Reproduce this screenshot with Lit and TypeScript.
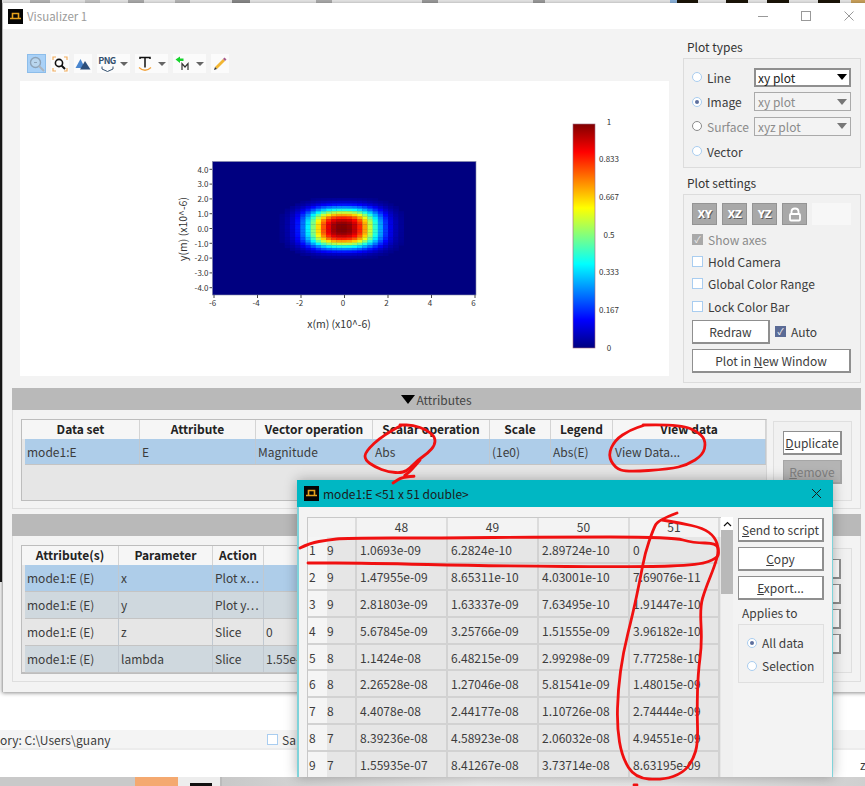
import { LitElement, html, css, svg } from "lit";
import { customElement } from "lit/decorators.js";

const FONT = css`"Noto Sans CJK SC", "Noto Sans", sans-serif`;

const jet = (v: number) => {
  const c = (x: number) => Math.round(255 * Math.max(0, Math.min(1, 1.5 - Math.abs(x))));
  return `rgb(${c(4 * v - 3)},${c(4 * v - 2)},${c(4 * v - 1)})`;
};

// mode profile, fitted by eye to the contours of the plot
const field = (x: number, y: number) =>
  Math.exp(-Math.pow(Math.abs(x + 0.07) / 1.6, 2.5) - Math.pow(Math.abs(y) / 1.3, 3));

const smooth = (pts: number[][]) => {
  let d = `M${pts[0][0]} ${pts[0][1]}`;
  for (let i = 1; i < pts.length - 1; i++) {
    const mx = (pts[i][0] + pts[i + 1][0]) / 2;
    const my = (pts[i][1] + pts[i + 1][1]) / 2;
    d += ` Q${pts[i][0]} ${pts[i][1]} ${mx} ${my}`;
  }
  const last = pts[pts.length - 1];
  return d + ` L${last[0]} ${last[1]}`;
};

const INK = [
  [[402, 425], [383, 435], [365, 452], [365, 460], [375, 467], [388, 472], [403, 473], [410, 468], [418, 460], [428, 453], [435, 445], [435, 437], [427, 430], [413, 425], [400, 425]],
  [[420, 460], [410, 472], [402, 477], [418, 476], [402, 477], [393, 483]],
  [[643, 425], [680, 424], [700, 433], [706, 442], [703, 455], [687, 465], [670, 469], [627, 472], [615, 468], [608, 455], [615, 440], [630, 430], [645, 425]],
  [[300, 548], [310, 543], [328, 540], [345, 538], [440, 538], [547, 537], [673, 537], [693, 543], [717, 543], [719, 553], [717, 558], [700, 565], [640, 567], [492, 566], [363, 563], [308, 563]],
  [[677, 513], [658, 520], [653, 530], [645, 553], [640, 580], [633, 613], [623, 653], [618, 690], [617, 727], [622, 757], [635, 778], [663, 780], [683, 773], [693, 760], [698, 743], [697, 710], [698, 673], [702, 643], [700, 607], [705, 590], [715, 565], [719, 550], [715, 537], [703, 528], [680, 523], [662, 520]],
  [[634, 785], [637, 785]],
];

const STRIP = [
  [30, 20, "#b5b5b5"], [85, 15, "#c4c4c4"], [128, 16, "#aaa"], [175, 15, "#b5b5b5"], [232, 18, "#888"],
  [316, 16, "#aaa"], [422, 16, "#999"], [533, 12, "#999"], [670, 12, "#8ab0d8"], [768, 14, "#e2a25c"],
  [851, 16, "#c9a05a"], [677, 21, "#1b1508"], [726, 22, "#1b1508"], [767, 22, "#1b1508"], [818, 22, "#1b1508"],
];

const DATA = [
  ["1", "9", "1.0693e-09", "6.2824e-10", "2.89724e-10", "0"],
  ["2", "9", "1.47955e-09", "8.65311e-10", "4.03001e-10", "7.69076e-11"],
  ["3", "9", "2.81803e-09", "1.63337e-09", "7.63495e-10", "1.91447e-10"],
  ["4", "9", "5.67845e-09", "3.25766e-09", "1.51555e-09", "3.96182e-10"],
  ["5", "8", "1.1424e-08", "6.48215e-09", "2.99298e-09", "7.77258e-10"],
  ["6", "8", "2.26528e-08", "1.27046e-08", "5.81541e-09", "1.48015e-09"],
  ["7", "8", "4.4078e-08", "2.44177e-08", "1.10726e-08", "2.74444e-09"],
  ["8", "7", "8.39236e-08", "4.58923e-08", "2.06032e-08", "4.94551e-09"],
  ["9", "7", "1.55935e-07", "8.41267e-08", "3.73714e-08", "8.63195e-09"],
];

const PARAMS = [
  ["mode1:E (E)", "x", "Plot x…", "", "sel"],
  ["mode1:E (E)", "y", "Plot y…", "", "alt"],
  ["mode1:E (E)", "z", "Slice", "0", "plain"],
  ["mode1:E (E)", "lambda", "Slice", "1.55e-6", "alt"],
];

const logo = html`<svg class="logo" viewBox="0 0 15 15">
  <rect width="15" height="15" fill="#050505" />
  <path d="M4.5 9.5V4.5H10.5V9.5M2 9.5H13" fill="none" stroke="#e5a21c" stroke-width="1.6" />
</svg>`;

const caret = html`<span class="caret"></span>`;

@customElement("app-root")
export class AppRoot extends LitElement {
  static styles = css`
    :host {
      display: block;
      position: relative;
      width: 865px;
      height: 786px;
      overflow: hidden;
      background: #fff;
      font-family: ${FONT};
      font-size: 12px;
      color: #3c3c3c;
    }
    * { box-sizing: border-box; }

    /* desktop behind the windows */
    .backdrop { display: flex; flex-direction: column; height: 786px; }
    .strip { position: relative; height: 3px; background: #e4e4e4; flex: none; }
    .strip i { position: absolute; top: 0; height: 3px; }
    .edge { position: absolute; left: 0; top: 0; width: 2px; height: 582px; background: #1a1a1a; }
    .spacer { flex: 1; }
    .status {
      flex: none;
      height: 20px;
      padding-top: 1px;
      background: #f4f4f4;
      border-bottom: 2px solid #ececec;
      display: flex;
      align-items: center;
      white-space: nowrap;
      line-height: 18px;
    }
    .status .path { width: 267px; }
    .status .box { margin-right: 4px; }
    .below { flex: none; height: 27px; display: flex; justify-content: flex-end; align-items: center; }
    .below span { width: 5px; overflow: hidden; padding-top: 2px; }
    .taskbar { flex: none; height: 9px; display: flex; background: #c9c9c9; }
    .taskbar .left { width: 135px; }
    .taskbar .orange { width: 43px; background: #f4a970; }
    .taskbar .tab { width: 44px; background: #ededed; border-right: 2px solid #bbb; padding: 6px 0 0 12px; }
    .taskbar .tab i { display: block; width: 22px; height: 3px; background: #111; }
    .taskbar .rest { flex: 1; background: linear-gradient(90deg, #c8c8c8, #ececec 40%, #e6e6e6 70%, #cfcfcf); }

    /* main window */
    .window {
      position: absolute;
      left: 2px;
      top: 3px;
      width: 870px;
      height: 689px;
      display: flex;
      flex-direction: column;
      background: #f3f3f3;
      border-left: 1px solid #b5b5b5;
      box-shadow: 0 1px 4px rgba(0, 0, 0, 0.45);
    }
    .titlebar {
      flex: none;
      height: 26px;
      background: #fff;
      display: flex;
      align-items: center;
      padding-left: 5px;
      color: #9b9b9b;
    }
    .titlebar .name { font-size: 11.5px; }
    .logo { width: 15px; height: 15px; flex: none; margin-right: 4px; }
    .controls { margin-left: auto; margin-right: 13px; display: flex; gap: 23px; }
    .controls svg { width: 20px; height: 12px; }
    .top { flex: none; height: 354px; display: flex; }
    .left { width: 680px; padding: 25px 0 0 17px; }
    .toolbar { display: flex; height: 19px; gap: 5px; padding-left: 7px; margin-bottom: 8px; }
    .tool {
      width: 18px;
      height: 19px;
      background: #fbfbfb;
      display: flex;
      align-items: center;
      justify-content: center;
    }
    .tool svg { width: 16px; height: 16px; flex: none; }
    .tool.on { width: 19px; background: #a9d1f7; border: 1px solid #8cbdea; }
    .tool.drop { width: 33px; justify-content: flex-start; padding-left: 2px; }
    .caret {
      margin-left: auto;
      margin-right: 2px;
      border: 4px solid transparent;
      border-top: 4px solid #666;
      border-bottom: 0;
    }
    .png { display: flex; flex-direction: column; align-items: center; width: 16px; }
    .pngt { font-size: 9px; line-height: 10px; font-weight: 600; color: #33506e; letter-spacing: -0.6px; }
    .png svg { width: 13px; height: 6px; }
    .plot { width: 649px; height: 295px; background: #fff; display: block; }
    .plot text { font-family: ${FONT}; fill: #333; }

    .side { width: 178px; }
    .side h4 { margin: 0; font-weight: 400; font-size: 12px; line-height: 18px; padding-left: 4px; color: #333; }
    .types { margin-top: 9px; }
    .group { border: 1px solid #dcdcdc; background: #f1f1f1; }
    .types .group { height: 110px; margin-top: 2px; padding: 6px 9px 0 8px; }
    .trow { display: flex; align-items: center; height: 24.6px; }
    .trow label { width: 50px; display: flex; align-items: center; gap: 5px; }
    .radio {
      width: 10px;
      height: 10px;
      flex: none;
      border-radius: 50%;
      border: 1px solid #a9cdf0;
      background: #fff;
      display: flex;
      align-items: center;
      justify-content: center;
    }
    .radio.on::after { content: ""; width: 4px; height: 4px; border-radius: 50%; background: #5d6f9e; }
    .radio.off { border-color: #8a8a8a; }
    .dim { color: #8b8b8b; }
    .select {
      width: 97px;
      height: 19px;
      margin-left: 12px;
      padding: 0 3px;
      display: flex;
      align-items: center;
      border: 1px solid #aaa;
      color: #8b8b8b;
      background: #f3f3f3;
    }
    .select.live { border: 2px solid #8f8f8f; background: #fff; color: #222; padding: 0 2px; }
    .select::after {
      content: "";
      margin-left: auto;
      border: 5px solid transparent;
      border-top: 6px solid #777;
      border-bottom: 0;
    }
    .select.live::after { border-top-color: #000; }
    .settings { margin-top: 6px; }
    .settings .group { height: 189px; margin-top: 2px; padding: 8px 9px 0 8px; }
    .views { display: flex; gap: 5px; height: 22px; margin-bottom: 3px; }
    .view {
      width: 25px;
      height: 22px;
      background: #a8a8a8;
      border: 1px solid #949494;
      color: #fff;
      font-family: "DejaVu Sans", sans-serif;
      font-weight: 700;
      font-size: 10px;
      letter-spacing: -0.5px;
      display: flex;
      align-items: center;
      justify-content: center;
      text-shadow: 1px 1px 0 #5c5c5c;
    }
    .view svg { width: 14px; height: 15px; }
    .blank { width: 39px; background: #f7f7f7; }
    .check { display: flex; align-items: center; gap: 5px; height: 22.4px; }
    .box { width: 11px; height: 11px; flex: none; background: #fff; border: 1px solid #a9cdf0; display: block; }
    .box.ticked {
      background: #5b6b96;
      border-color: #5b6b96;
      color: #fff;
      font-size: 9px;
      line-height: 9px;
      text-align: center;
    }
    .box.grey { background: #a9a9a9; border-color: #a9a9a9; color: #eee; font-size: 9px; line-height: 9px; text-align: center; }
    .redraw { display: flex; align-items: center; gap: 5px; margin-top: 2px; height: 24px; }
    .btn {
      background: #fff;
      border: 1px solid #8f8f8f;
      border-bottom-width: 2px;
      border-right-width: 2px;
      display: flex;
      align-items: center;
      justify-content: center;
      white-space: nowrap;
    }
    .btn u { text-underline-offset: 1px; }
    .redraw .btn { width: 78px; height: 24px; }
    .btn.wide { width: 159px; height: 24px; margin-top: 5px; }

    /* collapsible sections */
    .section { margin: 5px 0 0 9px; width: 849px; }
    .bar {
      height: 22px;
      background: #b9b9b9;
      display: flex;
      align-items: center;
      justify-content: center;
      gap: 1px;
      color: #444;
    }
    .bar i { border: 7px solid transparent; border-top: 9px solid #000; border-bottom: 0; margin-top: 1px; }
    .panel { display: flex; border: 1px solid #dedede; border-top: 0; padding: 9px 8px 0 8px; gap: 6px; }
    .attrs .panel { height: 99px; }
    .params { margin-top: 5px; }
    .params .panel { height: 146px; }
    .table { width: 746px; border: 1px solid #bdbdbd; border-right-color: #d8d8d8; background: #e6e6e6; height: 82px; display: flex; flex-direction: column; }
    .params .table { height: 129px; border-bottom-width: 2px; }
    .row { display: grid; flex: none; }
    .attrs .row { grid-template-columns: 118px 116px 117px 117px 61px 62px 153px; }
    .params .row { grid-template-columns: 97px 94px 51px 503px; }
    .head { height: 19px; background: #f6f6f6; font-weight: 700; color: #222; line-height: 18px; text-align: center; }
    .head span { border-right: 1px solid #d4d4d4; white-space: nowrap; overflow: hidden; }
    .cells { margin-left: 3px; height: 27px; line-height: 25px; border-bottom: 1px solid #c4c4c4; }
    .attrs .cells { height: 26px; background: #aecde9; grid-template-columns: 115px 116px 117px 117px 61px 62px 153px; }
    .params .cells { grid-template-columns: 94px 94px 51px 503px; }
    .cells span { padding-left: 2px; border-right: 1px solid #c0c8d0; white-space: nowrap; overflow: hidden; }
    .cells.sel { background: #aecde9; }
    .cells.alt { background: #cfd8de; }
    .cells.plain { background: #e6e6e6; }
    .actions { width: 79px; height: 80px; margin-top: 2px; border: 1px solid #dfdfdf; padding: 9px 9px 0; background: #f1f1f1; }
    .actions .btn { width: 59px; height: 24px; margin-bottom: 5px; }
    .actions .btn.off { background: #b4b4b4; border-color: #a6a6a6; color: #808080; }
    .params .actions { height: 125px; margin-top: 3px; padding: 10px 10px 0; }
    .params .actions .btn { height: 20px; width: 57px; }

    /* data dialog */
    .dialog {
      position: absolute;
      left: 297px;
      top: 480px;
      width: 536px;
      height: 297px;
      display: flex;
      flex-direction: column;
      background: #f3f3f3;
      border: solid #7fd3da;
      border-width: 0 1px 0 2px;
      box-shadow: 0 0 12px rgba(0, 0, 0, 0.3);
    }
    .dtitle {
      flex: none;
      height: 27px;
      margin: 0 -1px 0 -2px;
      background: #00b7c3;
      color: #1c1c1c;
      display: flex;
      align-items: center;
      padding: 0 11px 0 7px;
    }
    .dtitle svg:last-child { margin-left: auto; width: 11px; height: 11px; }
    .dbody { flex: 1; min-height: 0; display: flex; padding: 10px 0 0 8px; overflow: hidden; }
    .dtable { width: 414px; flex: none; border-left: 1px solid #c8c8c8; border-top: 1px solid #c8c8c8; }
    .drow { display: grid; grid-template-columns: 49px 91px 91px 91px 90px; }
    .dhead { height: 19px; line-height: 18px; background: #f3f3f3; text-align: center; }
    .dhead span { border-right: 2px solid #dcdcdc; }
    .ddata { height: 26.9px; line-height: 26px; background: #e6e6e6; }
    .ddata span { border-right: 2px solid #d2d2d2; border-bottom: 2px solid #d2d2d2; padding-left: 3px; white-space: nowrap; overflow: hidden; }
    .ddata .rowno { display: flex; padding: 0; }
    .rowno b { width: 19px; font-weight: 400; background: #f5f5f5; padding-left: 1px; }
    .rowno em { font-style: normal; }
    .scroll { width: 12px; flex: none; display: flex; flex-direction: column; background: #f0f0f0; margin-right: 5px; }
    .scroll .up { height: 13px; background: #fff; display: flex; align-items: center; justify-content: center; }
    .scroll .up svg { width: 9px; height: 6px; }
    .scroll .thumb { height: 64px; background: #b9b9b9; }
    .dside { width: 86px; flex: none; display: flex; flex-direction: column; gap: 5px; margin-top: 1px; }
    .dside .btn { height: 24px; flex: none; }
    .dside p { margin: -1px 0 0 4px; line-height: 18px; }
    .applies { height: 59px; margin-top: -3px; border: 1px solid #dfdfdf; background: #f1f1f1; padding: 6px 8px 0; }
    .applies div { display: flex; align-items: center; gap: 5px; height: 23px; }

    .ink { position: absolute; inset: 0; width: 865px; height: 786px; pointer-events: none; }
    .ink path { fill: none; stroke: #f01010; stroke-width: 2.8; stroke-linejoin: round; stroke-linecap: round; }
  `;

  private plot() {
    const x0 = 212.4, y0 = 161.5, w = 263.6, h = 133.5, n = 51;
    const cells = [];
    for (let j = 0; j < n; j++) {
      for (let i = 0; i < n; i++) {
        const v = field(-6 + (12 * i) / (n - 1), -4.5 + (9 * j) / (n - 1));
        if (v < 0.012) continue;
        cells.push(svg`<rect x=${x0 + (i * w) / n} y=${y0 + (j * h) / n} width=${w / n + 0.3} height=${h / n + 0.3} fill=${jet(v)} />`);
      }
    }
    const xticks = [-6, -4, -2, 0, 2, 4, 6];
    const yticks = ["4.0", "3.0", "2.0", "1.0", "0.0", "-1.0", "-2.0", "-3.0", "-4.0"];
    const legend = ["1", "0.833", "0.667", "0.5", "0.333", "0.167", "0"];
    return html`<svg class="plot" viewBox="20 81 649 295">
      <defs>
        <linearGradient id="jet" x1="0" y1="0" x2="0" y2="1">
          ${[0, 1, 2, 3, 4, 5, 6, 7, 8].map((i) => svg`<stop offset=${i / 8} stop-color=${jet(1 - i / 8)} />`)}
        </linearGradient>
      </defs>
      <rect x=${x0} y=${y0} width=${w} height=${h} fill=${jet(0)} />
      ${cells}
      <rect x=${x0} y=${y0} width=${w} height=${h} fill="none" stroke="#8a8fa8" stroke-width="0.6" />
      ${xticks.map((t, i) => svg`
        <path d="M${214 + i * 43.5} 295V298" stroke="#444" />
        <text x=${212.5 + i * 43.5} y="306" font-size="8" text-anchor="middle">${t}</text>`)}
      ${yticks.map((t, i) => svg`
        <path d="M209.5 ${169.3 + i * 14.8}H212" stroke="#444" />
        <text x="208.5" y=${172.5 + i * 14.8} font-size="8" text-anchor="end">${t}</text>`)}
      <text x="339" y="328" font-size="10.5" text-anchor="middle">x(m) (x10^-6)</text>
      <text transform="translate(187 229) rotate(-90)" font-size="10.5" text-anchor="middle">y(m) (x10^-6)</text>
      <rect x="573" y="124" width="22" height="224" fill="url(#jet)" stroke="#a06a80" stroke-width="0.6" />
      ${legend.map((t, i) => svg`<text x="609" y=${124.5 + i * 37.7} font-size="8" text-anchor="middle">${t}</text>`)}
    </svg>`;
  }

  private toolbar() {
    return html`<div class="toolbar">
      <div class="tool on">
        <svg viewBox="0 0 16 16"><circle cx="6.5" cy="6.5" r="5" fill="#b9d6ee" stroke="#8da3b8" stroke-width="1.4" /><path d="M10 10l5 5" stroke="#aab4be" stroke-width="2" /><path d="M5 6.5h3" stroke="#8da3b8" /></svg>
      </div>
      <div class="tool">
        <svg viewBox="0 0 16 16"><path d="M1 4V1H4M12 1H15V4M15 12V15H12M4 15H1V12" fill="none" stroke="#f2ad5e" stroke-width="1.2" /><circle cx="7" cy="7" r="3.6" fill="#fff" stroke="#111" stroke-width="1.6" /><path d="M9.5 9.5l3.5 3.5" stroke="#111" stroke-width="2" /></svg>
      </div>
      <div class="tool">
        <svg viewBox="0 0 16 16"><path d="M0.5 12L5.5 3 10 12Z" fill="#4a86cf" /><path d="M5 13.5L10 5 15.5 13.5Z" fill="#2d4f7c" /></svg>
      </div>
      <div class="tool drop">
        <div class="png"><span class="pngt">PNG</span><svg viewBox="0 0 13 6"><path d="M1 0.5V3L6.5 5.5 12 3V0.5" fill="none" stroke="#33506e" /></svg></div>
        ${caret}
      </div>
      <div class="tool drop">
        <svg viewBox="0 0 16 16"><path d="M3 3V1.5H13V3M8 1.5V11.5" fill="none" stroke="#111" stroke-width="1.5" /><path d="M2 11.5Q8 17 14 11.5" fill="none" stroke="#f2a23c" stroke-width="1.3" /></svg>
        ${caret}
      </div>
      <div class="tool drop">
        <svg viewBox="0 0 16 16"><path d="M0.5 3.5L5 0.5V2.5H8.500V5H5V7Z" fill="#16d42c" /><path d="M7 14V7.5L10 11 13 7.5V14" fill="none" stroke="#333" stroke-width="1.2" /></svg>
        ${caret}
      </div>
      <div class="tool">
        <svg viewBox="0 0 16 16"><path d="M3 11L11 3 13 5 5 13Z" fill="#f2b632" /><path d="M11 3L12.5 1.5 14.5 3.5 13 5Z" fill="#a65a8a" /><path d="M3 11L2 14 5 13Z" fill="#333" /></svg>
      </div>
    </div>`;
  }

  private side() {
    return html`<div class="side">
      <div class="types">
        <h4>Plot types</h4>
        <div class="group">
          <div class="trow"><label><span class="radio"></span>Line</label><span class="select live">xy plot</span></div>
          <div class="trow"><label><span class="radio on"></span>Image</label><span class="select">xy plot</span></div>
          <div class="trow dim"><label><span class="radio off"></span>Surface</label><span class="select">xyz plot</span></div>
          <div class="trow"><label><span class="radio"></span>Vector</label></div>
        </div>
      </div>
      <div class="settings">
        <h4>Plot settings</h4>
        <div class="group">
          <div class="views">
            <span class="view">XY</span><span class="view">XZ</span><span class="view">YZ</span>
            <span class="view"><svg viewBox="0 0 14 15"><path d="M3.5 7V4.5Q3.5 1.500 7 1.500T10.5 4.5V7" fill="none" stroke="#fff" stroke-width="1.8" /><rect x="2" y="7" width="10" height="6.5" rx="1" fill="none" stroke="#fff" stroke-width="1.8" /></svg></span>
            <span class="blank"></span>
          </div>
          <div class="check dim"><span class="box grey">✓</span>Show axes</div>
          <div class="check"><span class="box"></span>Hold Camera</div>
          <div class="check"><span class="box"></span>Global Color Range</div>
          <div class="check"><span class="box"></span>Lock Color Bar</div>
          <div class="redraw"><span class="btn">Redraw</span><span class="box ticked">✓</span>Auto</div>
          <div class="btn wide"><span>Plot in <u>N</u>ew Window</span></div>
        </div>
      </div>
    </div>`;
  }

  private dialog() {
    return html`<div class="dialog">
      <div class="dtitle">
        ${logo}<span>mode1:E &lt;51 x 51 double&gt;</span>
        <svg viewBox="0 0 11 11"><path d="M1 1L10 10M10 1L1 10" stroke="#1c1c1c" /></svg>
      </div>
      <div class="dbody">
        <div class="dtable">
          <div class="drow dhead"><span></span><span>48</span><span>49</span><span>50</span><span>51</span></div>
          ${DATA.map((r) => html`<div class="drow ddata">
            <span class="rowno"><b>${r[0]}</b><em>${r[1]}</em></span>
            <span>${r[2]}</span><span>${r[3]}</span><span>${r[4]}</span><span>${r[5]}</span>
          </div>`)}
        </div>
        <div class="scroll">
          <div class="up"><svg viewBox="0 0 9 6"><path d="M1 5L4.5 1.5 8 5" fill="none" stroke="#111" stroke-width="1.2" /></svg></div>
          <div class="thumb"></div>
        </div>
        <div class="dside">
          <span class="btn"><span><u>S</u>end to script</span></span>
          <span class="btn"><span><u>C</u>opy</span></span>
          <span class="btn"><span><u>E</u>xport...</span></span>
          <p>Applies to</p>
          <div class="applies">
            <div><span class="radio on"></span>All data</div>
            <div><span class="radio"></span>Selection</div>
          </div>
        </div>
      </div>
    </div>`;
  }

  render() {
    return html`
      <div class="backdrop">
        <div class="strip">
          ${STRIP.map((s) => html`<i style="left:${s[0]}px;width:${s[1]}px;background:${s[2]}"></i>`)}
        </div>
        <div class="spacer"></div>
        <div class="status"><span class="path">ory: C:\\Users\\guany</span><span class="box"></span>Sa</div>
        <div class="below"><span>z</span></div>
        <div class="taskbar"><div class="left"></div><div class="orange"></div><div class="tab"><i></i></div><div class="rest"></div></div>
      </div>
      <div class="edge"></div>

      <div class="window">
        <div class="titlebar">
          ${logo}<span class="name">Visualizer 1</span>
          <div class="controls">
            <svg viewBox="0 0 20 12"><path d="M5 6.5H15" stroke="#999" /></svg>
            <svg viewBox="0 0 20 12"><rect x="5.5" y="1.5" width="9" height="9" fill="none" stroke="#999" /></svg>
            <svg viewBox="0 0 20 12"><path d="M5.5 1.5L14.5 10.5M14.5 1.5L5.5 10.5" stroke="#999" /></svg>
          </div>
        </div>
        <div class="top">
          <div class="left">${this.toolbar()}${this.plot()}</div>
          ${this.side()}
        </div>
        <div class="section attrs">
          <div class="bar"><i></i>Attributes</div>
          <div class="panel">
            <div class="table">
              <div class="row head"><span>Data set</span><span>Attribute</span><span>Vector operation</span><span>Scalar operation</span><span>Scale</span><span>Legend</span><span>View data</span></div>
              <div class="row cells"><span>mode1:E</span><span>E</span><span>Magnitude</span><span>Abs</span><span>(1e0)</span><span>Abs(E)</span><span>View Data...</span></div>
            </div>
            <div class="actions">
              <div class="btn"><span><u>D</u>uplicate</span></div>
              <div class="btn off"><span><u>R</u>emove</span></div>
            </div>
          </div>
        </div>
        <div class="section params">
          <div class="bar"></div>
          <div class="panel">
            <div class="table">
              <div class="row head"><span>Attribute(s)</span><span>Parameter</span><span>Action</span><span></span></div>
              ${PARAMS.map((p) => html`<div class="row cells ${p[4]}"><span>${p[0]}</span><span>${p[1]}</span><span>${p[2]}</span><span>${p[3]}</span></div>`)}
            </div>
            <div class="actions">
              <div class="btn"></div><div class="btn"></div><div class="btn"></div><div class="btn"></div>
            </div>
          </div>
        </div>
      </div>

      ${this.dialog()}

      <svg class="ink" viewBox="0 0 865 786">
        ${INK.map((p) => svg`<path d=${smooth(p)} />`)}
      </svg>
    `;
  }
}
